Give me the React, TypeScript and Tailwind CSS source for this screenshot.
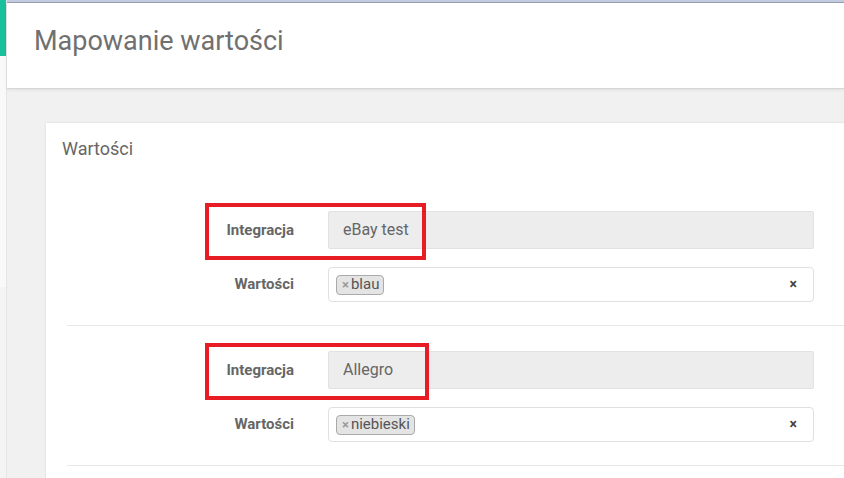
// Mapowanie wartości — integration value mapping screen with two highlighted rows.

const ROWS = [
  { integration: 'eBay test', tag: 'blau', boxW: 'w-[221px]' },
  { integration: 'Allegro', tag: 'niebieski', boxW: 'w-[224px]' },
]

function MappingRow({ integration, tag, boxW }: { integration: string; tag: string; boxW: string }) {
  return (
    <div className="border-b border-[#e8e8e8] pt-[25px] pb-[23px] first:pt-0">
      <div className="relative flex items-center">
        <label className="w-[261px] shrink-0 pr-[34px] text-right text-[15px] font-bold text-[#666]">Integracja</label>
        <div className="flex h-[38px] w-[486px] items-center rounded-[2px] border border-[#e2e2e2] bg-[#ededed] px-[14px] text-[16px] text-[#666]">
          {integration}
        </div>
        {/* annotation frame */}
        <div className={`pointer-events-none absolute top-[-8px] left-[138px] h-[57px] border-[4px] border-[#e81c24] ${boxW}`} />
      </div>
      <div className="mt-[18px] flex items-center">
        <label className="w-[261px] shrink-0 pr-[34px] text-right text-[15px] font-bold text-[#666]">Wartości</label>
        <div className="flex h-[35px] w-[486px] items-center rounded-[4px] border border-[#e0e0e0] bg-white pr-[16px] pl-[7px]">
          <span className="flex h-[20px] items-center rounded-[4px] border border-[#aaa] bg-[#e4e4e4] pr-[4px] pl-[5px] text-[15px] text-[#555]">
            <span className="mr-[2px] text-[13px] font-bold text-[#999]">×</span>
            {tag}
          </span>
          <span className="ml-auto text-[14px] font-bold text-[#444]">×</span>
        </div>
      </div>
    </div>
  )
}

export default function App() {
  return (
    <div className="relative h-[478px] w-[844px] overflow-hidden bg-[#f1f1f1]" style={{ fontFamily: 'Roboto, "Noto Sans", sans-serif' }}>
      <div className="flex h-full">
        {/* sidebar sliver */}
        <div className="flex w-[7px] shrink-0 flex-col border-r border-[#e4e4e4] bg-[#f9f9f9]">
          <div className="h-[56px] bg-[#1abf9b]" />
          <div className="h-[231px]" />
          <div className="flex-1 bg-[#f4f4f4]" />
        </div>

        <div className="flex min-w-0 flex-1 flex-col">
          <div className="h-[3px] shrink-0 border-b border-[#9aa0b0] bg-[#c3cbe0]" />
          <header className="flex h-[86px] shrink-0 items-center border-b border-[#d6d6d6] bg-white pl-[27px] shadow-[0_1px_3px_rgba(0,0,0,0.08)]">
            <h1 className="-mt-[8px] text-[27px] font-normal text-[#707070]">Mapowanie wartości</h1>
          </header>

          <main className="pt-[34px] pl-[39px]">
            <section className="min-h-[400px] w-[860px] bg-white shadow-[0_0_2px_rgba(0,0,0,0.12)]">
              <h2 className="pt-[13px] pl-[16px] text-[18px] leading-[26px] text-[#666]">Wartości</h2>
              <div className="mt-[49px] pl-[21px]">
                {ROWS.map((r) => (
                  <MappingRow key={r.integration} {...r} />
                ))}
              </div>
            </section>
          </main>
        </div>
      </div>
    </div>
  )
}
